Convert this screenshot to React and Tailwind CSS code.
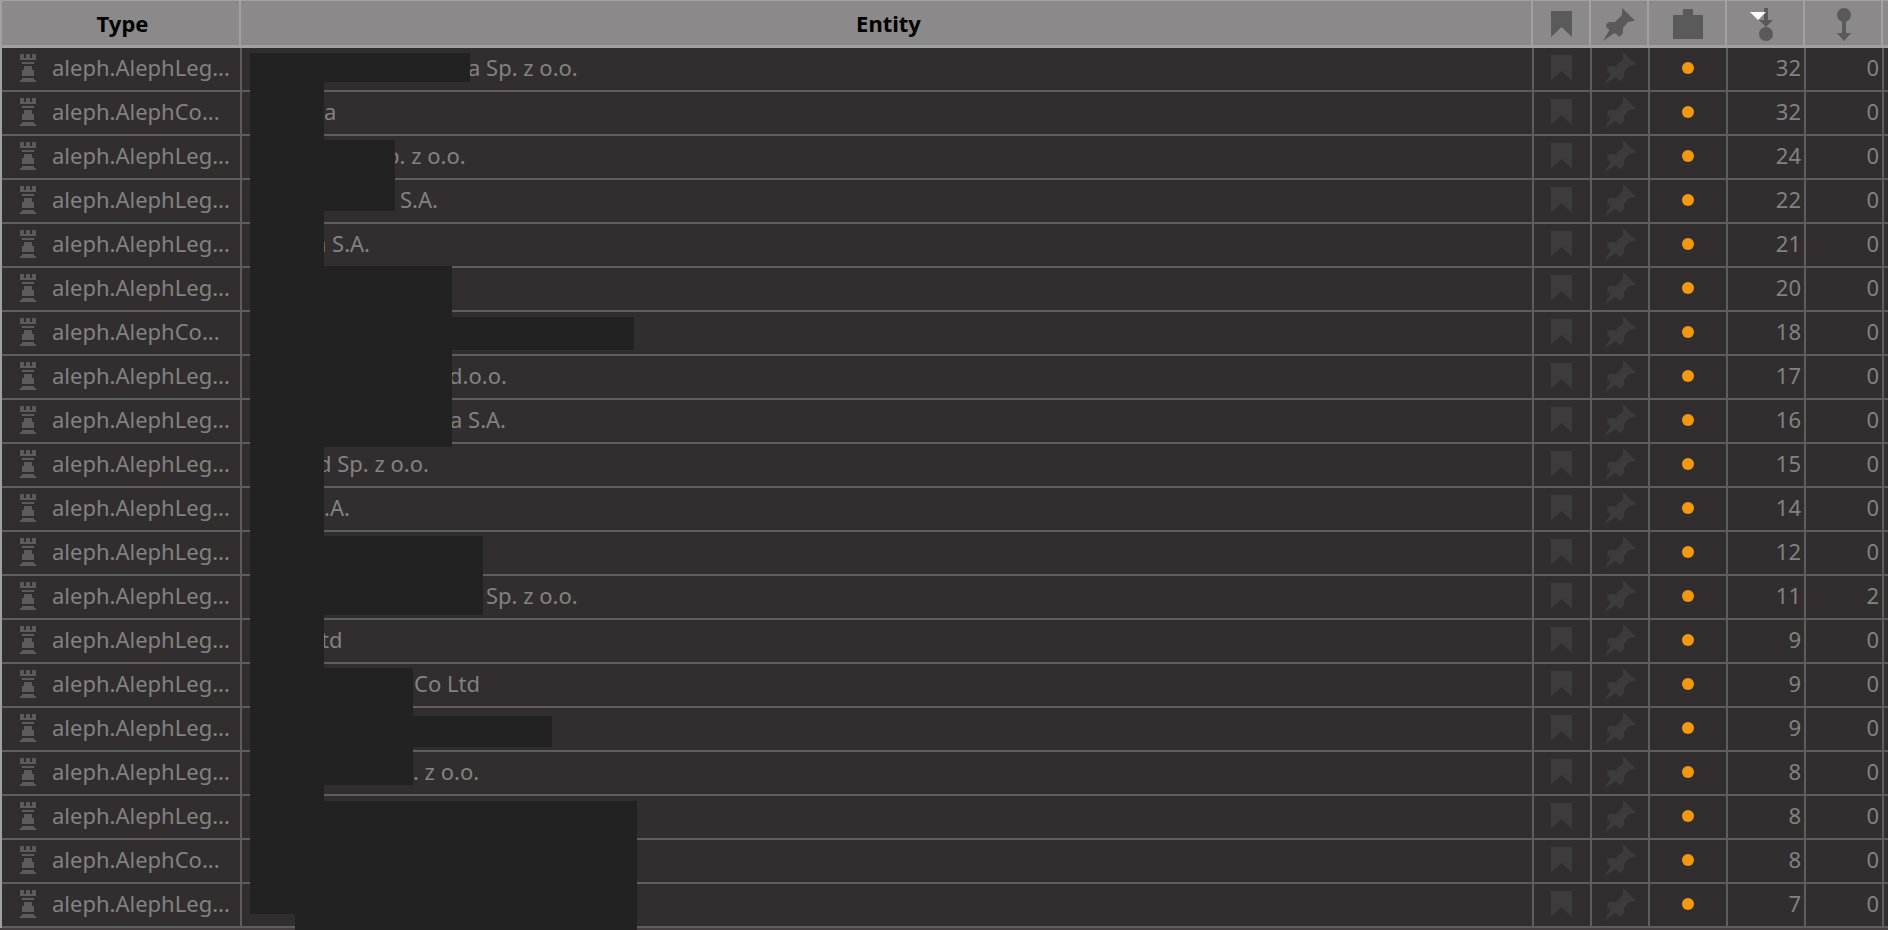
const ROWS = [
    { type: "aleph.AlephLeg...", hidden: 218, text: "a Sp. z o.o.", incoming: 32, outgoing: 0 },
    { type: "aleph.AlephCo...", hidden: 74, text: "a", incoming: 32, outgoing: 0 },
    { type: "aleph.AlephLeg...", hidden: 136, text: "p. z o.o.", incoming: 24, outgoing: 0 },
    { type: "aleph.AlephLeg...", hidden: 150, text: "S.A.", incoming: 22, outgoing: 0 },
    { type: "aleph.AlephLeg...", hidden: 64, text: "a S.A.", incoming: 21, outgoing: 0 },
    { type: "aleph.AlephLeg...", hidden: 0, text: "", incoming: 20, outgoing: 0 },
    { type: "aleph.AlephCo...", hidden: 0, text: "", incoming: 18, outgoing: 0 },
    { type: "aleph.AlephLeg...", hidden: 199, text: "d.o.o.", incoming: 17, outgoing: 0 },
    { type: "aleph.AlephLeg...", hidden: 200, text: "a S.A.", incoming: 16, outgoing: 0 },
    { type: "aleph.AlephLeg...", hidden: 68, text: "d Sp. z o.o.", incoming: 15, outgoing: 0 },
    { type: "aleph.AlephLeg...", hidden: 74, text: ".A.", incoming: 14, outgoing: 0 },
    { type: "aleph.AlephLeg...", hidden: 0, text: "", incoming: 12, outgoing: 0 },
    { type: "aleph.AlephLeg...", hidden: 236, text: "Sp. z o.o.", incoming: 11, outgoing: 2 },
    { type: "aleph.AlephLeg...", hidden: 71, text: "td", incoming: 9, outgoing: 0 },
    { type: "aleph.AlephLeg...", hidden: 164, text: "Co Ltd", incoming: 9, outgoing: 0 },
    { type: "aleph.AlephLeg...", hidden: 0, text: "", incoming: 9, outgoing: 0 },
    { type: "aleph.AlephLeg...", hidden: 163, text: ". z o.o.", incoming: 8, outgoing: 0 },
    { type: "aleph.AlephLeg...", hidden: 0, text: "", incoming: 8, outgoing: 0 },
    { type: "aleph.AlephCo...", hidden: 0, text: "", incoming: 8, outgoing: 0 },
    { type: "aleph.AlephLeg...", hidden: 0, text: "", incoming: 7, outgoing: 0 },
];

// Blocks laid over the entity names
const REDACTIONS = [
    "left-[250px] top-[53px] w-[74px] h-[861px]",
    "left-[250px] top-[53px] w-[220px] h-[29px]",
    "left-[250px] top-[140px] w-[145px] h-[71px]",
    "left-[250px] top-[266px] w-[202px] h-[181px]",
    "left-[452px] top-[317px] w-[182px] h-[33px]",
    "left-[250px] top-[536px] w-[233px] h-[79px]",
    "left-[250px] top-[668px] w-[163px] h-[117px]",
    "left-[413px] top-[716px] w-[139px] h-[31px]",
    "left-[295px] top-[801px] w-[342px] h-[129px]",
];

const RookIcon = () => (
    <svg width="16" height="28" viewBox="0 0 16 28" fill="#5c5c5c" shapeRendering="crispEdges" aria-hidden="true">
        <path d="M0 0h4v4h2V0h4v4h2V0h4v6H0zM2 8h12v2H2zM4 12h8v4h2v6H2v-6h2zM2 24h12v2h2v2H0v-2h2z" />
    </svg>
);

const BookmarkIcon = ({ className }) => (
    <svg width="22" height="26" viewBox="0 0 22 26" className={className} aria-hidden="true">
        <path fill="currentColor" d="M0 0h21v26L10.500 16 0 26z" />
    </svg>
);

const PinIcon = ({ className }) => (
    <svg width="33" height="33" viewBox="0 0 33 33" className={className} aria-hidden="true">
        <path fill="currentColor" d="M19 0l13 12.500-7 1.500-5 6v5l-3.500 4-5-4L0 33l6.500-11-3.500-3 .5-3 2.500-2h6l7-7z" />
    </svg>
);

const CaseIcon = () => (
    <svg width="30" height="30" viewBox="0 0 30 30" fill="#5a5a5a" aria-hidden="true">
        <path d="M10 0h10v6h10v24H0V6h10z" />
    </svg>
);

const IncomingIcon = () => (
    <svg width="14" height="33" viewBox="0 0 14 33" fill="#5a5a5a" aria-hidden="true">
        <path d="M5 0h4v12h5l-7 7-7-7h5z" />
        <circle cx="7" cy="26" r="7" />
    </svg>
);

const OutgoingIcon = () => (
    <svg width="14" height="33" viewBox="0 0 14 33" fill="#5a5a5a" aria-hidden="true">
        <circle cx="7" cy="7" r="7" />
        <path d="M5 12h4v13h5l-7 8-7-8h5z" />
    </svg>
);

const HeaderCell = ({ label, className = "pt-0.5", children }) => (
    <th scope="col" className="p-0 font-bold">
        <div className="mr-px h-11 border-r-2 border-[#a1a1a1]">
            <button type="button" aria-label={label} className={`relative flex h-full w-full items-center justify-center ${className}`}>
                {children}
            </button>
        </div>
    </th>
);

const cell = "h-11 border-r-2 border-b-2 border-[#5e5e5e] p-0 pb-0.5";

const App = () => {
    return (
        <main className="relative overflow-hidden bg-[#322e2f] font-['Noto_Sans','Open_Sans',sans-serif] text-[22px] leading-[30px] text-[#828282]">
            <table className="w-full table-fixed border-separate border-spacing-0 border-l-2 border-[#a1a1a1]">
                <colgroup>
                    <col className="w-[240px]" />
                    <col />
                    <col className="w-[58px]" />
                    <col className="w-[58px]" />
                    <col className="w-[78px]" />
                    <col className="w-[78px]" />
                    <col className="w-[78px]" />
                    <col className="w-[4px]" />
                </colgroup>
                <thead className="text-black">
                    <tr className="bg-[#8b8989] [&>th]:border-t [&>th]:border-b-3 [&>th]:border-[#a1a1a1]">
                        <HeaderCell label="Type" className="pl-1">Type</HeaderCell>
                        <HeaderCell label="Entity" className="pl-1">Entity</HeaderCell>
                        <HeaderCell label="Bookmarked"><BookmarkIcon className="text-[#5a5a5a]" /></HeaderCell>
                        <HeaderCell label="Pinned"><PinIcon className="text-[#5a5a5a]" /></HeaderCell>
                        <HeaderCell label="Collection"><CaseIcon /></HeaderCell>
                        <HeaderCell label="Incoming links">
                            <IncomingIcon />
                            <svg width="16" height="8" viewBox="0 0 16 8" className="absolute top-[11px] left-[22px]" aria-hidden="true">
                                <path fill="#fff" d="M0 0h16L8 8z" />
                            </svg>
                        </HeaderCell>
                        <HeaderCell label="Outgoing links"><OutgoingIcon /></HeaderCell>
                        <td className="border-t border-b-3 border-[#a1a1a1] p-0" />
                    </tr>
                </thead>
                <tbody>
                    {ROWS.map((row, index) => (
                        <tr key={index}>
                            <td className={cell}>
                                <div className="flex items-center gap-4 pl-[18px] whitespace-nowrap">
                                    <RookIcon />
                                    <span className="pb-0.5">{row.type}</span>
                                </div>
                            </td>
                            <td className={cell}>
                                <div className="flex pb-0.5 pl-2 whitespace-nowrap">
                                    <span className="shrink-0" style={{ width: row.hidden }} />
                                    <span>{row.text}</span>
                                </div>
                            </td>
                            <td className={cell}>
                                <BookmarkIcon className="mx-auto text-[#3e3b3c]" />
                            </td>
                            <td className={cell}>
                                <PinIcon className="mx-auto text-[#3e3b3c]" />
                            </td>
                            <td className={cell}>
                                <div className="mx-auto size-3 rounded-full bg-[#f4980f]" />
                            </td>
                            <td className={`${cell} text-right`}><div className="pr-[3px] pb-0.5">{row.incoming}</div></td>
                            <td className={`${cell} text-right`}><div className="pr-[3px] pb-0.5">{row.outgoing}</div></td>
                            <td className="border-b-2 border-[#5e5e5e] p-0" />
                        </tr>
                    ))}
                </tbody>
            </table>
            <div className="h-0.5 bg-[#463f41]" />

            {REDACTIONS.map((block) => (
                <div key={block} className={`absolute bg-[#222] ${block}`} />
            ))}
        </main>
    );
};

export default App;
